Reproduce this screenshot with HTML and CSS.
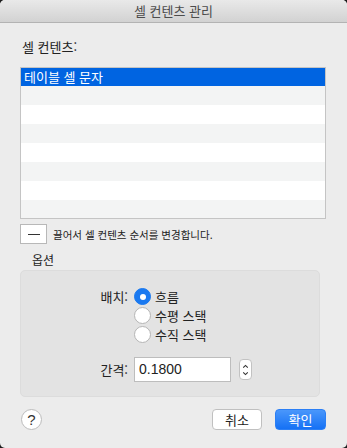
FILE: index.html
```html
<!DOCTYPE html>
<html lang="ko">
<head>
  <meta charset="UTF-8">
  <title>셀 컨텐츠 관리</title>
  <link rel="stylesheet" href="styles.css">
</head>
<body>
  <div class="window">
    <div class="titlebar">셀 컨텐츠 관리</div>
    <div class="content">
      <div class="list-label">셀 컨텐츠:</div>
      <div class="list">
        <div class="row selected">테이블 셀 문자</div>
        <div class="row"></div>
        <div class="row"></div>
        <div class="row"></div>
        <div class="row"></div>
        <div class="row"></div>
        <div class="row"></div>
        <div class="row"></div>
      </div>
      <div class="list-tools">
        <button class="minus-btn"><span class="minus"></span></button>
        <span class="hint">끌어서 셀 컨텐츠 순서를 변경합니다.</span>
      </div>
      <div class="group-title">옵션</div>
      <div class="group">
        <div class="form-grid">
          <div class="form-label">배치:</div>
          <div class="radios">
            <label class="radio checked"><span class="dot"></span>흐름</label>
            <label class="radio"><span class="dot"></span>수평 스택</label>
            <label class="radio"><span class="dot"></span>수직 스택</label>
          </div>
          <div class="form-label spacing-label">간격:</div>
          <div class="spacing">
            <div class="field">0.1800</div>
            <div class="stepper">
              <svg width="12" height="20" viewBox="0 0 12 20">
                <path d="M3.5 7.5 L6 5 L8.5 7.5" fill="none" stroke="#333" stroke-width="1.2"/>
                <path d="M3.5 12.5 L6 15 L8.5 12.5" fill="none" stroke="#333" stroke-width="1.2"/>
              </svg>
            </div>
          </div>
        </div>
      </div>
      <div class="footer">
        <button class="help-btn">?</button>
        <div class="actions">
          <button class="btn">취소</button>
          <button class="btn primary">확인</button>
        </div>
      </div>
    </div>
  </div>
</body>
</html>
```

FILE: styles.css
```css
* { margin: 0; padding: 0; box-sizing: border-box; }
html, body {
  width: 347px;
  height: 448px;
  background: #1c1c1c;
  overflow: hidden;
}
body {
  font-family: "Noto Sans CJK KR", "Noto Sans", sans-serif;
  font-size: 13px;
  color: #222;
}
.window {
  width: 347px;
  height: 448px;
  background: #ececec;
  border-radius: 5px;
  overflow: hidden;
}
.titlebar {
  height: 23px;
  line-height: 22px;
  text-align: center;
  color: #4c4c4c;
  font-size: 13px;
  background: linear-gradient(#e9e9e9, #d2d2d2);
  border-bottom: 1px solid #b3b3b3;
}
.content {
  padding: 0 21px 0 20px;
}
.list-label {
  margin-top: 14px;
  padding-left: 2px;
  height: 20px;
  line-height: 20px;
}
.list {
  margin-top: 10px;
  width: 306px;
  height: 152px;
  border: 1px solid #c4c4c4;
  background: #fff;
  overflow: hidden;
}
.row {
  height: 19px;
  line-height: 19px;
  padding-left: 3px;
}
.row:nth-child(even) { background: #f3f4f4; }
.row.selected {
  background: #0064e1;
  color: #fff;
  height: 18px;
  line-height: 18px;
}
.list-tools {
  display: flex;
  align-items: center;
  gap: 6px;
  margin-top: 5px;
  height: 20px;
}
.minus-btn {
  width: 27px;
  height: 20px;
  border: 1px solid #b8b8b8;
  background: #fff;
  display: flex;
  align-items: center;
  justify-content: center;
}
.minus {
  width: 12px;
  height: 1px;
  background: #333;
}
.hint {
  font-size: 10.5px;
  color: #222;
}
.group-title {
  margin-top: 7px;
  padding-left: 12px;
  height: 18px;
  line-height: 18px;
  font-size: 12px;
}
.group {
  width: 300px;
  height: 127px;
  margin-top: 1px;
  background: #e3e3e3;
  border: 1px solid #dcdcdc;
  border-radius: 5px;
  padding-top: 16px;
}
.form-grid {
  display: grid;
  grid-template-columns: 107px auto;
  column-gap: 6px;
  row-gap: 13px;
  align-items: start;
}
.form-label {
  text-align: right;
  height: 19px;
  line-height: 19px;
  font-size: 13px;
}
.radios {
  display: flex;
  flex-direction: column;
}
.radio {
  display: flex;
  align-items: center;
  gap: 4px;
  height: 19px;
  font-size: 13px;
}
.dot {
  width: 17px;
  height: 17px;
  border-radius: 50%;
  background: #fff;
  border: 1px solid #b5b5b5;
}
.radio.checked .dot {
  background: #1a79f0;
  border-color: #1a79f0;
  display: flex;
  align-items: center;
  justify-content: center;
}
.radio.checked .dot::after {
  content: "";
  width: 6px;
  height: 6px;
  border-radius: 50%;
  background: #fff;
}
.spacing-label {
  margin-top: 3px;
}
.spacing {
  display: flex;
  align-items: center;
  gap: 8px;
}
.field {
  width: 97px;
  height: 25px;
  line-height: 23px;
  padding-left: 4px;
  background: #fff;
  border: 1px solid #bdbdbd;
  font-family: "Liberation Sans", sans-serif;
  font-size: 14px;
}
.stepper {
  width: 13px;
  height: 21px;
  border: 1px solid #c2c2c2;
  border-radius: 4px;
  background: #fff;
  display: flex;
  align-items: center;
  justify-content: center;
}
.stepper svg { display: block; }
.footer {
  display: flex;
  justify-content: space-between;
  align-items: center;
  margin-top: 12px;
  padding-left: 1px;
}
.help-btn {
  width: 21px;
  height: 21px;
  border-radius: 50%;
  border: 1px solid #bcbcbc;
  background: #fff;
  font-family: "Liberation Sans", sans-serif;
  font-size: 15px;
  color: #333;
}
.actions {
  display: flex;
  gap: 13px;
}
.btn {
  width: 50px;
  height: 21px;
  border-radius: 4px;
  border: 1px solid #c0c0c0;
  background: #fff;
  font-family: "Noto Sans CJK KR", sans-serif;
  font-size: 13px;
  color: #222;
}
.btn.primary {
  width: 51px;
  border-color: #2b7ff5;
  background: linear-gradient(#4a97fb, #1571f5);
  color: #fff;
}
```
